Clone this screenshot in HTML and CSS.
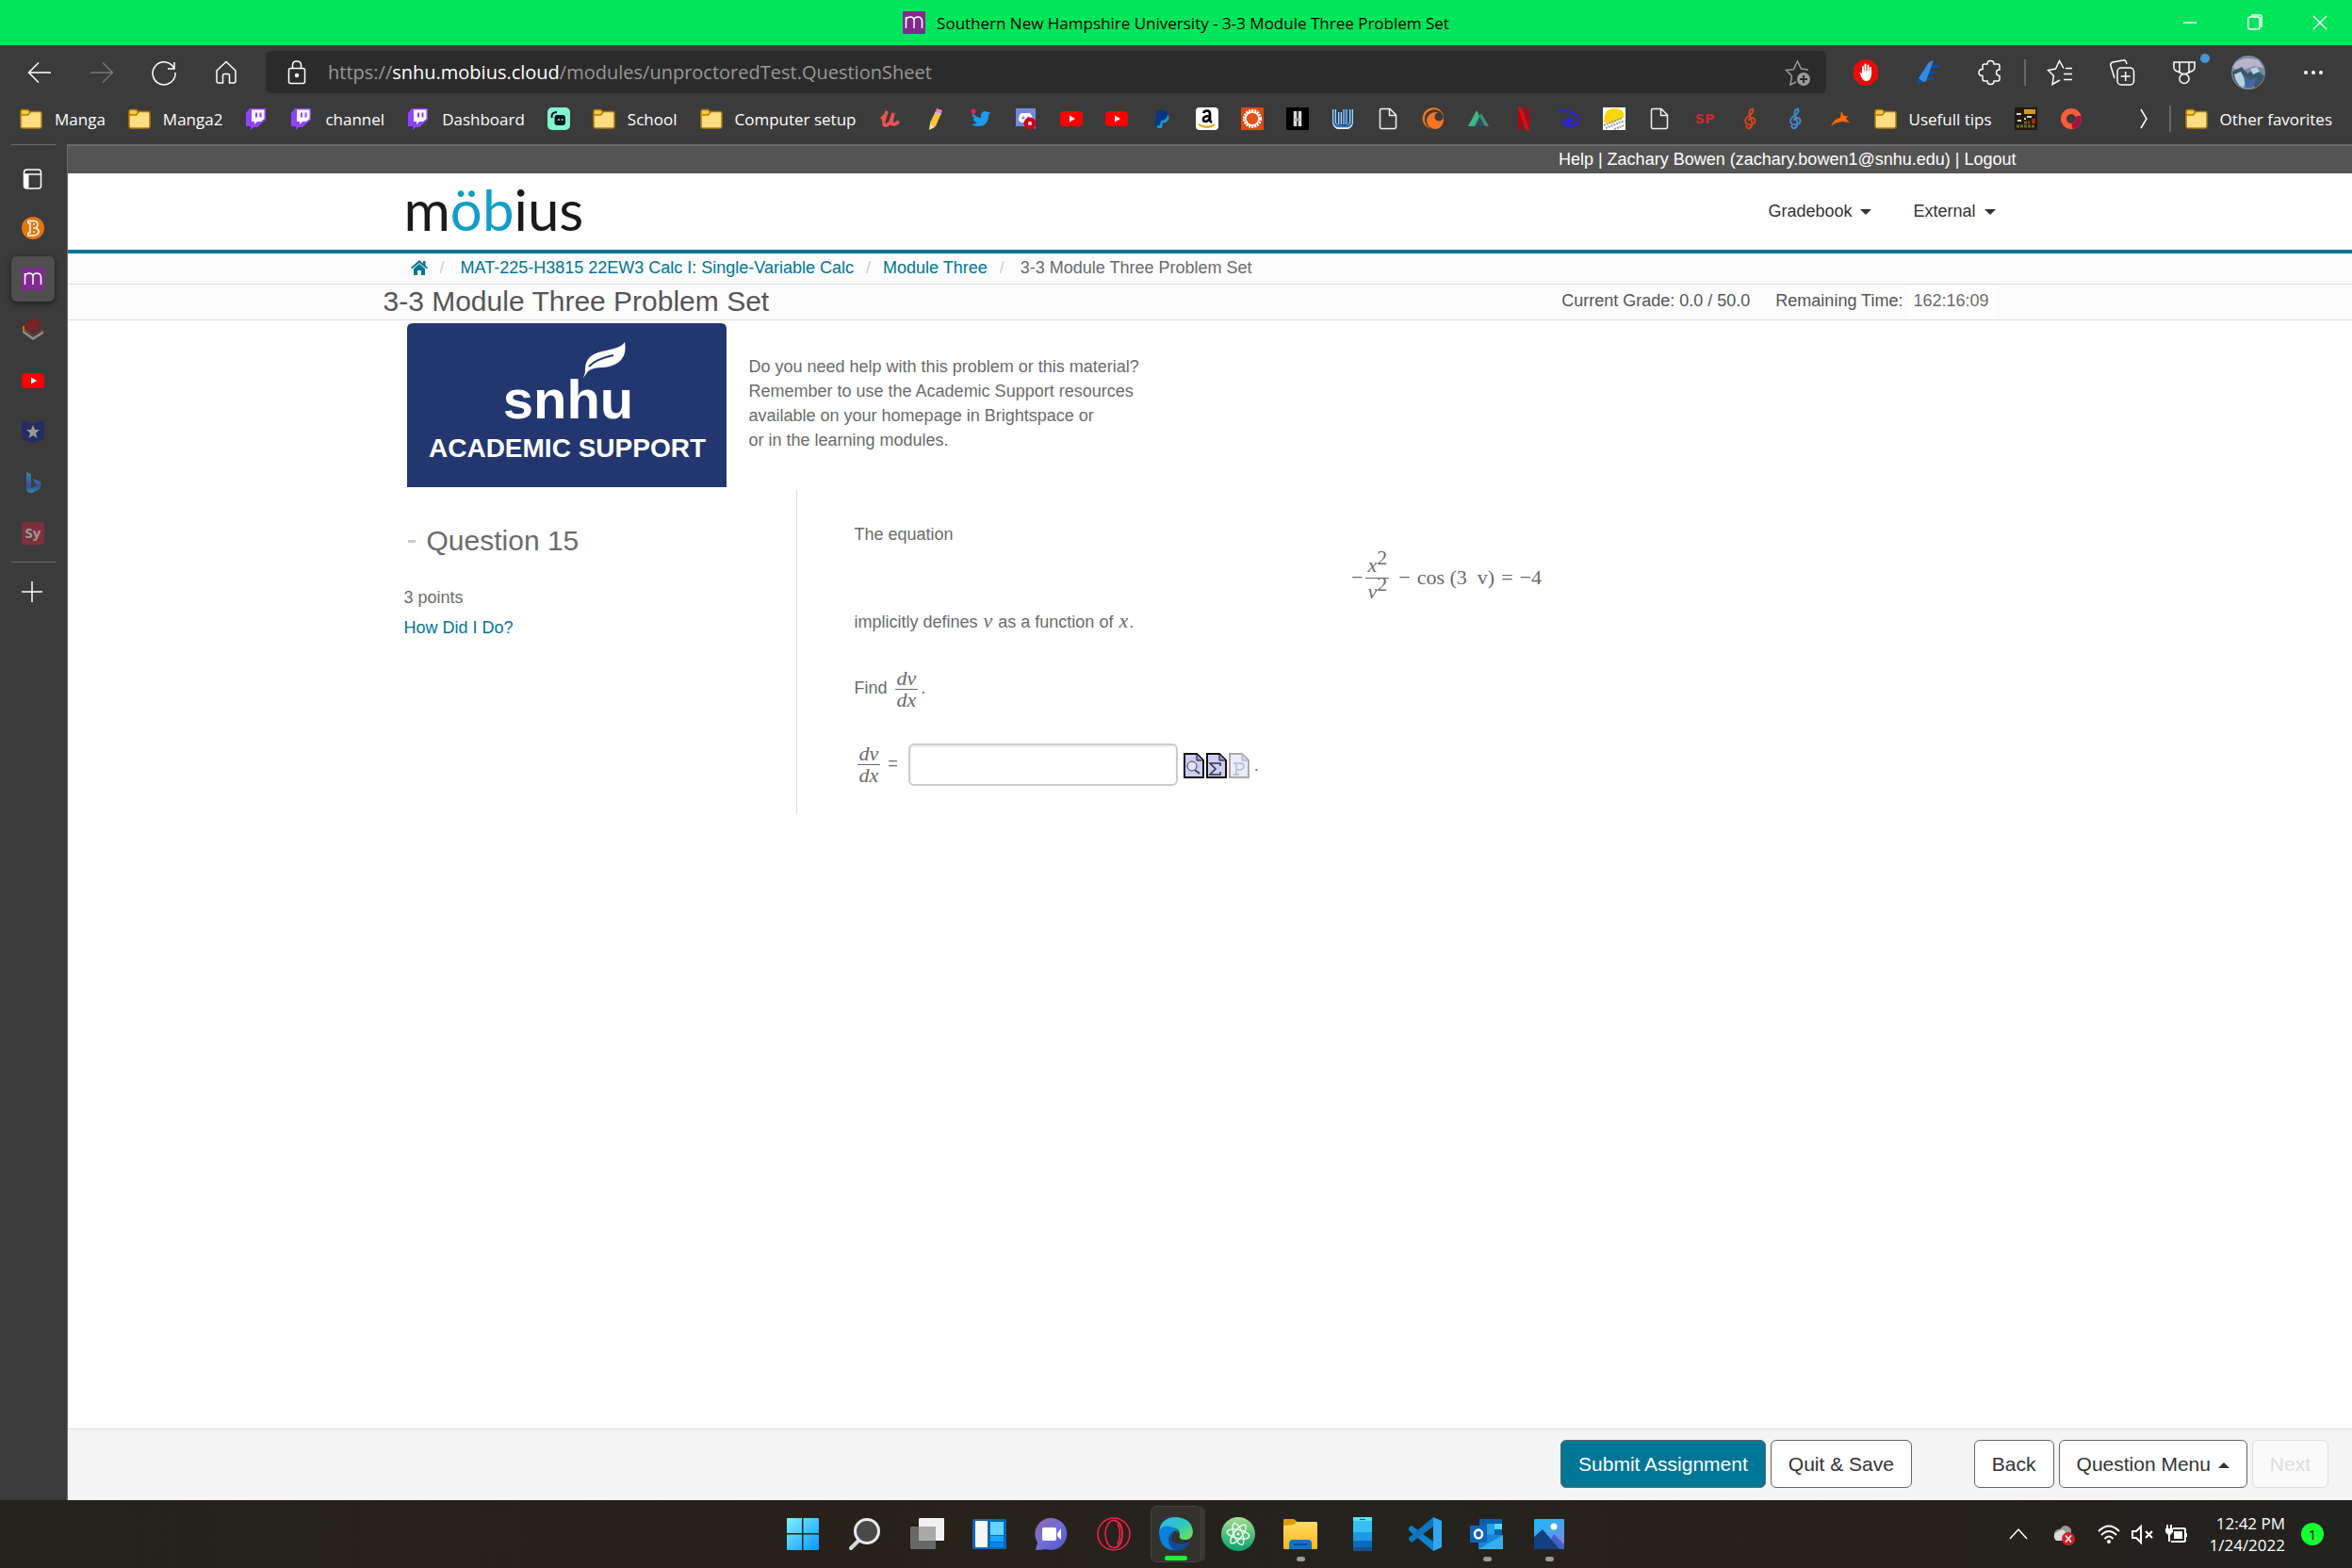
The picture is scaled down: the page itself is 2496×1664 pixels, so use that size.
FILE: index.html
```
<!DOCTYPE html>
<html lang="en">
<head>
  <meta charset="UTF-8">
  <meta name="viewport" content="width=device-width, initial-scale=1.0">
  <title>Southern New Hampshire University - 3-3 Module Three Problem Set</title>
  <link rel="stylesheet" href="styles.css">
</head>
<body>
  <!-- Shared icons -->
  <svg class="defs" aria-hidden="true">
    <defs>
      <linearGradient id="gWin" x1="0" y1="0" x2="1" y2="1"><stop offset="0" stop-color="#7df3ff"/><stop offset="1" stop-color="#0a94ff"/></linearGradient>
      <linearGradient id="gChat" x1="0" y1="0" x2="1" y2="1"><stop offset="0" stop-color="#9a62a8"/><stop offset=".5" stop-color="#6f70d8"/><stop offset="1" stop-color="#5252c8"/></linearGradient>
      <linearGradient id="gEdge" x1="0" y1="0" x2="1" y2="1"><stop offset="0" stop-color="#35b8f0"/><stop offset=".5" stop-color="#2cc8c0"/><stop offset="1" stop-color="#7ae83c"/></linearGradient>
      <linearGradient id="gAtom" x1="0" y1="0" x2="0" y2="1"><stop offset="0" stop-color="#a8dc90"/><stop offset="1" stop-color="#08a070"/></linearGradient>
      <linearGradient id="gFold" x1="0" y1="0" x2="0" y2="1"><stop offset="0" stop-color="#ffd966"/><stop offset="1" stop-color="#fcb814"/></linearGradient>
      <linearGradient id="gPhoto" x1="0" y1="0" x2="1" y2="1"><stop offset="0" stop-color="#22b4f0"/><stop offset=".5" stop-color="#40a8ee"/><stop offset="1" stop-color="#9a78dc"/></linearGradient>
      <linearGradient id="gBing" x1="0" y1="0" x2="0" y2="1"><stop offset="0" stop-color="#3b87a8"/><stop offset=".7" stop-color="#34509c"/><stop offset="1" stop-color="#3593a8"/></linearGradient>
    </defs>
    <symbol id="folder" viewBox="0 0 24 24"><path d="M1 4.500Q1 2.500 3 2.500H8.500L11 5V9H1z" fill="#ffc83d" stroke="#a87c0c" stroke-width="1.500"/><path d="M3 8H8.500L11.500 4.500H21Q23 4.500 23 6.500V20Q23 22 21 22H3Q1 22 1 20V8z" fill="#ffdd80" stroke="#a87c0c" stroke-width="1.500"/></symbol>
    <symbol id="twitch" viewBox="0 0 24 24"><path d="M5 1H22V13L13 21H9L6 24V20H1V6z" fill="#8f43ff"/><path d="M7 2.500H20.500V12L17 15H13L10 18V15H7z" fill="#fff"/><path d="M12 5.500V10.500M16.500 5.500V10.500" stroke="#8f43ff" stroke-width="2"/></symbol>
    <symbol id="youtube" viewBox="0 0 24 24"><g stroke="none"><rect y="4" width="24" height="16" rx="4" fill="#f00"/><path d="M10 8.500L16 12L10 15.500z" fill="#fff"/></g></symbol>
    <symbol id="page" viewBox="0 0 24 24"><path d="M5 1.500H14L20.500 8V20.500Q20.500 22.500 18.500 22.500H5Q3.500 22.500 3.500 20.500V3Q3.500 1.500 5 1.500zM13.500 2V8.500H20" fill="none" stroke="#f2f2f2" stroke-width="1.500"/></symbol>
    <symbol id="clef" viewBox="0 0 24 24"><path d="M8 19Q9 23 12 22Q15 20 14 15L11.500 7Q11 2 15 1.500Q17 5 11 9Q5 13 8 17Q12 20 16.500 17Q19 12 15 11Q11 11 11 14" fill="none" stroke="currentColor" stroke-width="2"/></symbol>
    <symbol id="mlogo" viewBox="0 0 24 24"><rect width="24" height="24" rx="1" fill="#812a91" stroke="none"/><path d="M3.500 18V6M3.500 10Q4 6 8 6T12 10V18M12 10Q12 6 16 6T20.500 10V18" fill="none" stroke="#fff" stroke-width="1.500"/></symbol>
  </svg>

  <header class="titlebar">
    <div class="tab-title">
      <svg class="ic24"><use href="#mlogo"/></svg>
      <span>Southern New Hampshire University - 3-3 Module Three Problem Set</span>
    </div>
    <div class="window-buttons">
      <button aria-label="Minimize"><svg class="ic24" viewBox="0 0 24 24"><path d="M5 12H19"/></svg></button>
      <button aria-label="Restore"><svg class="ic24" viewBox="0 0 24 24"><rect x="5" y="6" width="12" height="13" rx="2"/><path d="M8 4H17Q19 4 19 6V17"/></svg></button>
      <button aria-label="Close"><svg class="ic24" viewBox="0 0 24 24"><path d="M5 5L19 19M19 5L5 19"/></svg></button>
    </div>
  </header>

  <nav class="toolbar">
    <button aria-label="Back"><svg class="ic28" viewBox="0 0 28 28"><path d="M26 14H3M13 3.500L2.500 14L13 24.500"/></svg></button>
    <button class="dim" aria-label="Forward"><svg class="ic28" viewBox="0 0 28 28"><path d="M2 14H25M15 3.500L25.500 14L15 24.500"/></svg></button>
    <button aria-label="Refresh"><svg class="ic28" viewBox="0 0 28 28"><path d="M25 10A12 12 0 1 0 26 14M25 3V10H18"/></svg></button>
    <button aria-label="Home"><svg class="ic28" viewBox="0 0 28 28"><path d="M4 12L14 2.500L24 12V23Q24 25 22 25H17.500V17Q17.500 15.500 16 15.500H12Q10.500 15.500 10.500 17V25H6Q4 25 4 23z"/></svg></button>
    <div class="address">
      <svg class="ic28" viewBox="0 0 28 28"><rect x="5.500" y="9.500" width="17" height="16" rx="2"/><path d="M9.500 9.500V6Q9.500 2 14 2T18.500 6V9.500"/><circle cx="14" cy="17" r="1.500" fill="#fff"/></svg>
      <div class="url">https://<b>snhu.mobius.cloud</b>/modules/unproctoredTest.QuestionSheet</div>
      <svg class="ic28 dim" viewBox="0 0 28 28"><path d="M12 24L6 27L7.500 17.500L1.500 11.500L9.500 10.500L13.500 2L17.500 10L25 11"/><circle cx="20" cy="21" r="7" fill="#9a9a9a" stroke="none"/><path d="M16 21H24M20 17V25" stroke="#2b2b2b" stroke-width="2"/></svg>
    </div>
    <button aria-label="Ad blocker"><svg class="ic28" viewBox="0 0 28 28"><path d="M8.500 0.500H19.500L27 8V20L19.500 27.500H8.500L1 20V8z" fill="#ea0a0a" stroke="none"/><path d="M11 16V8M13.500 15V5.500M16.500 15V6.500M19 16V9" stroke="#fff" stroke-width="2" stroke-linecap="round"/><path d="M9.800 13V15L7.500 14Q10 23 14.500 23Q20 23 20.200 14V12z" fill="#fff" stroke="none"/></svg></button>
    <button aria-label="Pen"><svg class="ic28" viewBox="0 0 28 28"><path d="M15 7.500H26M14 14H23M12 20.500H20" stroke="#1348a8" stroke-width="3"/><path d="M15 3L20 1L12 23L3 26L4 20z" fill="#2f8de6" stroke="none"/><path d="M3 26L4 20L9 24z" fill="#164690" stroke="none"/></svg></button>
    <button aria-label="Extensions"><svg class="ic28" viewBox="0 0 28 28"><path d="M8 5H11Q11 1.500 14.500 1.500T18 5H22Q24 5 24 7V11Q20.500 11 20.500 14T24 17.500V21Q24 23 22 23H18Q18 26.500 14.500 26.500T11 23H8Q6 23 6 21V17.500Q2 17.500 2 14T6 10.500V7Q6 5 8 5z"/></svg></button>
    <span class="divider"></span>
    <button aria-label="Favorites"><svg class="ic28" viewBox="0 0 28 28"><path d="M18 9.500L13.500 1.500L9.500 10L1.500 11.500L7.500 17.500L6 26.500L14 22M20 9.500H27M18 15.500H27M18 21.500H27"/></svg></button>
    <button aria-label="Collections"><svg class="ic28" viewBox="0 0 28 28"><rect x="9" y="9" width="17.500" height="18" rx="4"/><path d="M17.700 13V23M12.700 18H22.700M6 20L2 7Q1 4 4 3L15 1Q18 0 19 5"/></svg></button>
    <button class="rewards" aria-label="Rewards"><svg class="ic28" viewBox="0 0 28 28"><path d="M3 3H25V9Q25 11 23 12L15.500 15.500H12.500L5 12Q3 11 3 9zM9 3V13.500M19 3V13.500"/><circle cx="14" cy="20.500" r="5"/></svg></button>
    <button class="wide" aria-label="Profile"><svg class="avatar" viewBox="0 0 36 36"><circle cx="18" cy="18" r="18" fill="#788ba6"/><path d="M4 8Q14 0 29 5L34 13L24 11L11 16L1 13z" fill="#b9b4c6"/><path d="M1 17L11 12L17 19L26 14L35 22Q31 32 25 34L17 24L7 31Q1 25 1 17z" fill="#3c5868"/><path d="M3 20L10 17L16 28L12 34Q4 29 3 20zM20 14L27 12L30 17L23 20z" fill="#b8d0e0"/><path d="M13 21L20 26L28 23L22 34H15z" fill="#42689c"/></svg></button>
    <button class="wide" aria-label="Settings and more"><svg class="ic28" viewBox="0 0 28 28"><g fill="#fff" stroke="none"><circle cx="6" cy="14" r="2"/><circle cx="14" cy="14" r="2"/><circle cx="22" cy="14" r="2"/></g></svg></button>
  </nav>

  <nav class="bookmarks">
    <a href="#"><svg class="ic24"><use href="#folder"/></svg>Manga</a>
    <a href="#"><svg class="ic24"><use href="#folder"/></svg>Manga2</a>
    <a href="#" aria-label="Twitch"><svg class="ic24"><use href="#twitch"/></svg></a>
    <a href="#"><svg class="ic24"><use href="#twitch"/></svg>channel</a>
    <a href="#"><svg class="ic24"><use href="#twitch"/></svg>Dashboard</a>
    <a href="#" aria-label="Streamlabs"><svg class="ic24" viewBox="0 0 24 24"><rect width="24" height="24" rx="5" fill="#80f5d2"/><rect x="7.500" y="8" width="11.500" height="11" rx="3" fill="#09161d"/><path d="M4.500 11Q4 5 10 5" fill="none" stroke="#09161d" stroke-width="2"/><path d="M12 12V14M15.500 12V14" stroke="#80f5d2" stroke-width="1.500"/></svg></a>
    <a href="#"><svg class="ic24"><use href="#folder"/></svg>School</a>
    <a href="#"><svg class="ic24"><use href="#folder"/></svg>Computer setup</a>
    <a href="#" aria-label="Udemy"><svg class="ic24" viewBox="0 0 24 24"><path d="M2 12Q8 8 8 4L5 14Q4 20 8 19Q12 18 15 6L13 15Q13 21 21 15" fill="none" stroke="#ec5252" stroke-width="3.500"/></svg></a>
    <a href="#" aria-label="Pencil"><svg class="ic24" viewBox="0 0 24 24"><path d="M12 4L18 6L12 20L6 23V16z" fill="#fbc13c"/><path d="M13 1L19 3L17.500 8L11.500 6z" fill="#f37bb4"/><path d="M11.500 5.500L17.500 7.500" stroke="#b8c8d0" stroke-width="2"/><path d="M6 17L11 21L5 24z" fill="#f3d8ae"/></svg></a>
    <a href="#" aria-label="Twitter"><svg class="ic24" viewBox="0 0 24 24"><path d="M22 5L20 8Q20 20 9 20Q5 20 2 18Q6 18 8 16Q4 15 4 12H6Q2 10 3 6Q7 11 12 11Q11 5 16 4Q18 4 19 5z" fill="#1d9bf0"/><circle cx="4" cy="4" r="2.500" fill="#ee1d60"/></svg></a>
    <a href="#" aria-label="Discord"><svg class="ic24" viewBox="0 0 24 24"><path d="M1 1H22V23L17 20H1z" fill="#7289da"/><path d="M4 14Q4 8 7 6H16Q19 9 19 14L16 16H7z" fill="#fff"/><circle cx="9" cy="11" r="1.500" fill="#7289da"/><circle cx="14" cy="11" r="1.500" fill="#7289da"/><circle cx="16" cy="17" r="6.500" fill="#d0021b"/><circle cx="16" cy="17" r="2" fill="#fff"/></svg></a>
    <a href="#" aria-label="YouTube"><svg class="ic24"><use href="#youtube"/></svg></a>
    <a href="#" aria-label="YouTube Studio"><svg class="ic24"><use href="#youtube"/></svg></a>
    <a href="#" aria-label="PayPal"><svg class="ic24" viewBox="0 0 24 24"><path d="M10 7H18Q22 12 16 16H13L12 22H7z" fill="#179bd7"/><path d="M7 3H14Q20 4 18 9Q16 14 11 14L10 19H4z" fill="#0a3587"/></svg></a>
    <a href="#" aria-label="Amazon"><svg class="ic24" viewBox="0 0 24 24"><rect width="24" height="24" rx="4" fill="#fff"/><path d="M8 6Q9 3.500 12 3.500Q15 3.500 15 7V13Q15 15 17 16M15 9Q8 9 8 12.500Q8 15 10.500 15T15 11" fill="none" stroke="#000" stroke-width="2.700"/><path d="M3 18Q12 24 20 18" fill="none" stroke="#f90" stroke-width="1.800"/></svg></a>
    <a href="#" aria-label="Sun"><svg class="ic24" viewBox="0 0 24 24"><rect width="24" height="24" fill="#dd4b14"/><circle cx="12" cy="12" r="8.500" fill="none" stroke="#fff" stroke-width="3" stroke-dasharray="2 1"/><circle cx="12" cy="12" r="7" fill="#e45416" stroke="#fff" stroke-width="1.500"/></svg></a>
    <a href="#" aria-label="H"><svg class="ic24" viewBox="0 0 24 24"><rect width="24" height="24" fill="#000"/><path d="M9.500 4V20M14.500 4V20" stroke="#ddd" stroke-width="3.500"/><path d="M9 13H15" stroke="#aaa" stroke-width="3"/></svg></a>
    <a href="#" aria-label="Wuxia"><svg class="ic24" viewBox="0 0 24 24"><path d="M3 2V16Q4 21 8 21H16Q20 21 21 16V2M9 5V18M14.500 2V18" fill="none" stroke="#e8f4fc" stroke-width="4"/><path d="M3 2V16Q4 20 8 20H16Q20 20 21 16V2M9 5V18M14.500 2V18" fill="none" stroke="#2574c6" stroke-width="2.500"/></svg></a>
    <a href="#" aria-label="Page"><svg class="ic24"><use href="#page"/></svg></a>
    <a href="#" aria-label="Crunchyroll"><svg class="ic24" viewBox="0 0 24 24"><path d="M10 23A11.500 11.500 0 1 1 23.500 11Q20 1 11 2.500Q2 5 3 14Q4 20 10 23z" fill="#f47521"/><circle cx="14" cy="14" r="9" fill="#f47521"/><circle cx="18" cy="10" r="4.500" fill="#3b3b3b"/></svg></a>
    <a href="#" aria-label="Mountain"><svg class="ic24" viewBox="0 0 24 24"><path d="M10 3L19 20H1z" fill="#41b883"/><path d="M15 6L23 20H8z" fill="#34495e"/><path d="M15 6L23 20H19L13 9z" fill="#3f8f72"/></svg></a>
    <a href="#" aria-label="Netflix"><svg class="ic24" viewBox="0 0 24 24"><path d="M6 0H10V24L6 23zM14 0H18V23L14 24z" fill="#b1060f"/><path d="M6 0H10L18 24H14z" fill="#e50914"/></svg></a>
    <a href="#" aria-label="Disney"><svg class="ic24" viewBox="0 0 24 24"><path d="M1 4Q17 2 22 11Q24 20 12 19Q4 18 6 15Q10 13 18 14M12 9V22" fill="none" stroke="#2a22dc" stroke-width="2.400"/></svg></a>
    <a href="#" aria-label="Weather"><svg class="ic24" viewBox="0 0 24 24"><rect width="24" height="24" fill="#fff"/><path d="M1 16Q1 1 12 1T23 10L10 17z" fill="#f8d90c"/><path d="M1 19L21 11M3 22L23 14M12 23L23 19" stroke="#999" stroke-width="2" stroke-dasharray="2 1"/></svg></a>
    <a href="#" aria-label="Page"><svg class="ic24"><use href="#page"/></svg></a>
    <a href="#" aria-label="SP"><svg class="ic24" viewBox="0 0 24 24"><text class="sp-text" x="12" y="17" text-anchor="middle">SP</text></svg></a>
    <a href="#" aria-label="Clef"><svg class="ic24 clef-red"><use href="#clef"/></svg></a>
    <a href="#" aria-label="Clef"><svg class="ic24 clef-blue"><use href="#clef"/></svg></a>
    <a href="#" aria-label="Deer"><svg class="ic24" viewBox="0 0 24 24"><path d="M2 20Q5 12 12 11L13 4L16 9L20 9L18 12L22 16L14 15Q6 16 2 20z" fill="#f96706"/></svg></a>
    <a href="#"><svg class="ic24"><use href="#folder"/></svg>Usefull tips</a>
    <a href="#" aria-label="Gallery"><svg class="ic24" viewBox="0 0 24 24"><rect width="24" height="24" fill="#24180f"/><path d="M10 2H22V7H10z" fill="#d4981b"/><path d="M2 7H7M13 10H18M3 14H7M10 12H12" stroke="#d5d5b8" stroke-width="2"/><path d="M2 20H22M10 16H16" stroke="#647127" stroke-width="3" stroke-dasharray="3 1"/><path d="M18 12H22V17H18z" fill="#a22d20"/></svg></a>
    <a href="#" aria-label="Ring"><svg class="ic24" viewBox="0 0 24 24"><circle cx="12" cy="12" r="8" fill="none" stroke="#ff5a36" stroke-width="6"/><path d="M20 9Q21 18 13 20" fill="none" stroke="#a80d45" stroke-width="5.500"/></svg></a>
    <div class="bookmarks-end">
      <button aria-label="More bookmarks"><svg class="ic24" viewBox="0 0 24 24"><path d="M9 2L15 12L9 22"/></svg></button>
      <span class="divider"></span>
      <a href="#"><svg class="ic24"><use href="#folder"/></svg>Other favorites</a>
    </div>
  </nav>

  <div class="workspace">
    <aside class="sidebar">
      <hr>
      <button class="side-tabs" aria-label="Tab menu"><svg class="ic24" viewBox="0 0 24 24"><rect x="2.500" y="2" width="18" height="20" rx="3"/><path d="M2 7H21"/><path d="M5 7V21" stroke-width="5"/></svg></button>
      <button aria-label="B"><svg class="ic24" viewBox="0 0 24 24"><circle cx="12" cy="12" r="12" fill="#e8740c" stroke="none"/><path d="M7 4.500H13Q17 5 17 8T15 12Q18 13 18 16T13 20H7V17H9V7H7zM12 8H14M12 12H14M12 16H14" stroke="#fff"/></svg></button>
      <button class="active" aria-label="Mobius"><svg class="ic24"><use href="#mlogo"/></svg></button>
      <button aria-label="Books"><svg class="ic24" viewBox="0 0 24 24"><path d="M1 10L12 18L23 11V16L12 23L1 15z" fill="#8e8e8e" stroke="none"/><path d="M1 7L13 0L21 5L11 13z" fill="#7e2222" stroke="none"/><path d="M1 8L11 15L22 8M2 12L12 19L23 12" stroke="#6e2a2a"/><path d="M2 8V14" stroke="#a87b2b" stroke-width="2"/></svg></button>
      <button aria-label="YouTube"><svg class="ic24"><use href="#youtube"/></svg></button>
      <button aria-label="Star"><svg class="ic24" viewBox="0 0 24 24"><path d="M0 0L12 3L24 0V20L12 24L0 20z" fill="#252c60" stroke="none"/><path d="M12 5L14 10H19L15 13.500L16.500 19L12 16L7.500 19L9 13.500L5 10H10z" fill="#999" stroke="none"/></svg></button>
      <button aria-label="Bing"><svg class="ic24" viewBox="0 0 24 24"><path d="M5 1L10 3V18L14 16L17 14.500L14 13L12 8L20 11Q22 15 19 19L11 23Q5 23 5 19z" fill="url(#gBing)" stroke="none"/></svg></button>
      <button aria-label="Symbolab"><svg class="ic24" viewBox="0 0 24 24"><rect width="24" height="24" rx="3" fill="#7c303c" stroke="none"/><text class="sy-text" x="12" y="17" text-anchor="middle">Sy</text></svg></button>
      <hr>
      <button class="side-add" aria-label="Add"><svg class="ic24" viewBox="0 0 24 24"><path d="M11 1V23M0 12H22"/></svg></button>
    </aside>

    <div class="page">
      <div class="account">
        <div class="container">
          <a href="#">Help</a> | <a href="#">Zachary Bowen (zachary.bowen1@snhu.edu)</a> | <a href="#">Logout</a>
        </div>
      </div>
      <header class="site-header">
        <div class="container">
          <div class="brand">m<span>öb</span>ius</div>
          <nav class="menu">
            <button>Gradebook <i class="caret"></i></button>
            <button>External <i class="caret"></i></button>
          </nav>
        </div>
      </header>
      <div class="crumbs">
        <ol class="container">
          <li><a href="#" aria-label="Home"><svg class="home" viewBox="0 0 18 18"><path d="M9 1L18 9L17 10.500L9 4L1 10.500L0 9zM13 2H15.500V7L13 5zM3 10L9 5L15 10V17H11V12H7V17H3z" fill="#007697"/></svg></a></li>
          <li class="course"><a href="#">MAT-225-H3815 22EW3 Calc I: Single-Variable Calc</a></li>
          <li><a href="#">Module Three</a></li>
          <li class="current">3-3 Module Three Problem Set</li>
        </ol>
      </div>
      <div class="heading">
        <div class="container">
          <h1>3-3 Module Three Problem Set</h1>
          <div class="status">
            <span>Current Grade: 0.0 / 50.0</span>
            <span>Remaining Time: <span class="timer">162:16:09</span></span>
          </div>
        </div>
      </div>

      <main class="container content">
        <section class="support">
          <svg class="support-logo" viewBox="0 0 339 174" role="img" aria-label="SNHU Academic Support">
            <path d="M0 6Q0 0 6 0H333Q339 0 339 6V174H0z" fill="#22376f"/>
            <text class="snhu-text" x="171" y="101" text-anchor="middle">snhu</text>
            <path d="M189 52C188 30 206 31 219 27Q228 25 231 20C234 36 225 46 207 47Q197 47 192 51L187 58z" fill="#fff"/>
            <path d="M193 46Q200 38 219 34" fill="none" stroke="#22376f" stroke-width="2"/>
            <text class="academic-text" x="170" y="142" text-anchor="middle">ACADEMIC SUPPORT</text>
          </svg>
          <p>Do you need help with this problem or this material?<br>Remember to use the Academic Support resources<br>available on your homepage in Brightspace or<br>or in the learning modules.</p>
        </section>

        <section class="question">
          <div class="question-info">
            <h2><span class="dash"></span>Question 15</h2>
            <p>3 points</p>
            <p><a href="#">How Did I Do?</a></p>
          </div>
          <div class="question-body">
            <p>The equation</p>
            <div class="equation">
              <span>−</span>
              <span class="frac"><span><i>x</i><sup>2</sup></span><span><i>v</i><sup>2</sup></span></span>
              <span class="op">−</span>
              <span>cos (3 &nbsp;v)</span>
              <span class="op">=</span>
              <span>−4</span>
            </div>
            <p>implicitly defines <i class="var">v</i> as a function of <i class="var">x</i>.</p>
            <div class="find">Find <span class="frac"><i>dv</i><i>dx</i></span>.</div>
            <div class="answer">
              <label for="answer"><span class="frac"><i>dv</i><i>dx</i></span> =</label>
              <input type="text" id="answer">
              <button aria-label="Preview"><svg viewBox="0 0 22 27"><path d="M1 1H14L21 8V26H1z" fill="#ccccfb" stroke="#111" stroke-width="2"/><path d="M14 1V8H21z" fill="#9a9acb" stroke="#111"/><circle cx="9" cy="14" r="5" fill="#e2e2ff" stroke="#444"/><path d="M12 18L17 22" stroke="#444" stroke-width="2"/></svg></button>
              <button aria-label="Equation editor"><svg viewBox="0 0 22 27"><path d="M1 1H14L21 8V26H1z" fill="#ccccfb" stroke="#111" stroke-width="2"/><path d="M14 1V8H21z" fill="#9a9acb" stroke="#111"/><path d="M15 14V11H4L10 17L4 23H15V20" fill="none" stroke="#333" stroke-width="1.500"/></svg></button>
              <button aria-label="Plot" disabled><svg viewBox="0 0 22 27"><path d="M1 1H14L21 8V26H1z" fill="#ebebff" stroke="#aaa" stroke-width="2"/><path d="M14 1V8H21z" fill="#d4d4e8" stroke="#aaa"/><path d="M5 23H11M8 23V11M5 11H12Q16 11 16 14T12 18H8" fill="none" stroke="#b8b8c8" stroke-width="1.500"/></svg></button>
              <span>.</span>
            </div>
          </div>
        </section>
      </main>

      <footer class="actions">
        <button class="btn primary">Submit Assignment</button>
        <button class="btn">Quit &amp; Save</button>
        <button class="btn back">Back</button>
        <button class="btn">Question Menu <i class="caret up"></i></button>
        <button class="btn" disabled>Next</button>
      </footer>
    </div>
  </div>

  <footer class="taskbar">
    <div class="apps">
      <button aria-label="Start"><svg viewBox="0 0 36 36"><path d="M1.500 1Q1 1 1 2V17H17V1zM18.500 1V17H35V2Q35 1 34 1zM1 18.500V34Q1 35 2 35H17V18.500zM18.500 18.500V35H34Q35 35 35 34V18.500z" fill="url(#gWin)"/></svg></button>
      <button aria-label="Search"><svg viewBox="0 0 36 36"><path d="M11 25L3 33" stroke="#d5d8dc" stroke-width="4" stroke-linecap="round"/><circle cx="20" cy="15" r="12.500" fill="#4b4a46" stroke="#e8eaec" stroke-width="3"/></svg></button>
      <button aria-label="Task view"><svg viewBox="0 0 36 36"><rect x="9" y="1" width="27" height="24" rx="1" fill="#f1f1f1"/><rect y="10" width="27" height="24" rx="1" fill="#686866"/><path d="M9 10H27V25H9z" fill="#a9a9a8"/></svg></button>
      <button aria-label="Widgets"><svg viewBox="0 0 36 36"><rect y="2" width="36" height="32" rx="1" fill="#0a66bb"/><rect x="3" y="4" width="13" height="28" rx="1" fill="#f5f5f5"/><path d="M19 5H33V19H19z" fill="#64d4ff"/><path d="M19 20H33V26H19z" fill="#1ba4ff"/><path d="M19 27H33V32H19z" fill="#0a84f0"/></svg></button>
      <button aria-label="Chat"><svg viewBox="0 0 36 36"><path d="M1 35L3 27A17 17 0 1 1 12 34Q7 35 1 35z" fill="url(#gChat)"/><rect x="8" y="11" width="15" height="14" rx="2" fill="#fff"/><path d="M24 17L28 12V24L24 20z" fill="#fff"/></svg></button>
      <button aria-label="Opera"><svg viewBox="0 0 36 36"><g fill="none" stroke="#fa1e4e" stroke-width="1.500"><circle cx="18" cy="18" r="17"/><ellipse cx="18" cy="18" rx="9" ry="14.500"/><path d="M22 7Q27 18 22 29M18 3.500Q27 4 27 18T18 32.500"/></g></svg></button>
      <button class="current-app" aria-label="Edge"><svg viewBox="0 0 36 36"><path d="M0 17Q1 0 18 0Q35 1 36 16Q35 24 28 24Q20 24 22 19Q22 12 14 11Q4 10 0 17z" fill="url(#gEdge)"/><path d="M0 16Q2 8 12 10Q20 12 21 18Q18 12 14 17Q9 26 20 35Q1 37 0 16z" fill="#0a82d8"/><path d="M15 15Q10 20 14 25Q20 31 33 26Q28 36 18 36Q10 32 10 24Q10 18 15 15z" fill="#114a98"/></svg></button>
      <button aria-label="Atom"><svg viewBox="0 0 36 36"><circle cx="18" cy="18" r="18" fill="url(#gAtom)"/><g fill="none" stroke="#f4fff4" stroke-width="1.300"><ellipse cx="18" cy="18" rx="12" ry="4.500" transform="rotate(12 18 18)"/><ellipse cx="18" cy="18" rx="12" ry="4.500" transform="rotate(70 18 18)"/><ellipse cx="18" cy="18" rx="12" ry="4.500" transform="rotate(128 18 18)"/></g><circle cx="18" cy="18" r="1.500" fill="#fff"/></svg></button>
      <button class="open" aria-label="File Explorer"><svg viewBox="0 0 36 36"><path d="M0 3Q0 2 1 2H11L16 6V11H0z" fill="#dd9b00"/><path d="M0 9L11 8L14 5H35Q36 5 36 7V33Q36 34 35 34H1Q0 34 0 33z" fill="url(#gFold)"/><path d="M6 34V28Q6 24 10 24H26Q30 24 30 28V34z" fill="#0d73c8"/><path d="M11 29H25" stroke="#0a4a8c" stroke-width="2"/></svg></button>
      <button aria-label="Your Phone"><svg viewBox="0 0 36 36"><path d="M8 0H28V5H8z" fill="#52e4ff"/><path d="M8 4H28V16H8z" fill="#38bff4"/><path d="M8 16H28V25H8z" fill="#1c9be4"/><path d="M8 25H28V32H8z" fill="#086ac0"/><path d="M8 32H28V36H8z" fill="#14528c"/><path d="M15 2.500H21" stroke="#146080"/></svg></button>
      <button aria-label="Visual Studio Code"><svg viewBox="0 0 36 36"><path d="M1 11L4 9L27 26V36L1 14z" fill="#0f82cc"/><path d="M1 24L4 27L27 10V0L1 22z" fill="#0c76bc"/><path d="M27 0L36 4V32L27 36z" fill="#2fa7f2"/></svg></button>
      <button class="open" aria-label="Outlook"><svg viewBox="0 0 36 36"><path d="M10 2H34V20H10z" fill="#0a5fae"/><path d="M18 7H26V19H18z" fill="#28a0e4"/><path d="M26 7H34V13H26z" fill="#52dcff"/><path d="M9 18L35 19V34H9z" fill="#1685d4"/><path d="M9 34L35 19V34z" fill="#36aff0"/><rect y="9" width="18" height="18" rx="1" fill="#0f64b8"/><ellipse cx="9" cy="18" rx="4" ry="4.500" fill="none" stroke="#fff" stroke-width="2.500"/></svg></button>
      <button class="open" aria-label="Photos"><svg viewBox="0 0 36 36"><rect x="2" y="2" width="32" height="32" rx="1" fill="url(#gPhoto)"/><path d="M14 34L23 18L34 29V34z" fill="#4560c4"/><path d="M2 21L11 13L29 34H2z" fill="#153f80"/><circle cx="23" cy="10" r="3.500" fill="#fff"/></svg></button>
    </div>
    <div class="tray">
      <svg class="ic24" viewBox="0 0 24 24"><path d="M3 17L12 7L21 17"/></svg>
      <svg class="ic24 cloud" viewBox="0 0 24 24"><path d="M6 16Q0 14 3 9Q6 6 8 7Q14 -1 20 7V14z" fill="#999" stroke="none"/><path d="M4 19Q-1 13 5 10Q13 4 15 13V19z" fill="#dcdcdc" stroke="none"/><circle cx="17" cy="17" r="7" fill="#d32029" stroke="none"/><path d="M14 13.500L20 20.500M20 13.500L14 20.500"/></svg>
      <svg class="ic24" viewBox="0 0 24 24"><path d="M1 9Q12 -2 23 9M4 13Q12 5 20 13M7.500 17Q12 12 16.500 17" stroke-width="2"/><circle cx="12" cy="20" r="2" fill="#fff" stroke="none"/></svg>
      <svg class="ic24" viewBox="0 0 24 24"><path d="M1 9H5L10 4V21L5 16H1zM15 9L22 16M22 9L15 16" stroke-width="2"/></svg>
      <svg class="ic24" viewBox="0 0 24 24"><path d="M8 6H20Q21 6 21 8V18Q21 20 20 20H6M4 14V20M2 2V6M6 2V6M22 11V15" stroke-width="2"/><path d="M0 6H8V10L5 13V16H3V13L0 10z" fill="#fff" stroke="none"/><path d="M9 9H18V17H9z" fill="#fff" stroke="none"/></svg>
      <div class="clock">12:42 PM<br>1/24/2022</div>
      <span class="badge">1</span>
    </div>
  </footer>
</body>
</html>
```
FILE: styles.css
```
/* General Reset */
* {
  margin: 0;
  padding: 0;
  box-sizing: border-box;
}

body {
  display: flex;
  flex-direction: column;
  min-height: 100vh;
  background: #3b3b3b;
  color: #6b6b6b;
  font-family: "Liberation Sans", Arial, sans-serif;
  font-size: 18px;
}

button {
  border: none;
  background: none;
  color: inherit;
  font: inherit;
}

a {
  color: #007697;
  text-decoration: none;
}

svg {
  display: block;
  flex: none;
}

.defs {
  position: absolute;
  width: 0;
  height: 0;
}

.ic24 {
  width: 24px;
  height: 24px;
}

.ic28 {
  width: 28px;
  height: 28px;
}

/* Title bar */
.titlebar,
.toolbar,
.bookmarks,
.taskbar {
  font-family: "Open Sans", "Noto Sans", sans-serif;
}

.titlebar {
  display: grid;
  grid-template-columns: 1fr auto 1fr;
  align-items: center;
  height: 48px;
  background: #00e65b;
  color: #000;
  font-size: 17px;
}

.tab-title {
  grid-column: 2;
  display: flex;
  align-items: center;
  gap: 12px;
}

.window-buttons {
  display: flex;
  justify-content: flex-end;
}

.window-buttons button {
  display: grid;
  place-items: center;
  width: 69px;
  height: 48px;
}

.window-buttons svg,
.toolbar svg,
.bookmarks-end button svg,
.sidebar svg,
.tray svg {
  fill: none;
  stroke: #fff;
  stroke-width: 1.5;
}

/* Toolbar */
.toolbar {
  display: flex;
  align-items: center;
  height: 57px;
  padding: 0 7px 0 9px;
}

.toolbar button {
  display: grid;
  place-items: center;
  flex: none;
  width: 66px;
  height: 48px;
}

.toolbar .wide {
  width: 69px;
}

.toolbar .dim {
  stroke: #9a9a9a;
}

.toolbar .dim svg {
  stroke: #777;
}

.address {
  display: flex;
  flex: 1;
  align-items: center;
  height: 45px;
  margin: 0 9px;
  padding: 0 16px 0 19px;
  border-radius: 6px;
  background: #2b2b2b;
}

.url {
  flex: 1;
  padding-left: 19px;
  color: #999;
  font-size: 20px;
}

.url b {
  color: #fff;
  font-weight: normal;
}

.divider {
  width: 2px;
  height: 28px;
  margin: 0 3px;
  background: #666;
}

.rewards {
  position: relative;
}

.rewards::after {
  content: "";
  position: absolute;
  top: 4px;
  right: 6px;
  width: 10px;
  height: 10px;
  border-radius: 50%;
  background: #4697d8;
}

.toolbar .avatar {
  width: 36px;
  height: 36px;
  stroke: none;
}

/* Bookmarks */
.bookmarks {
  display: flex;
  align-items: center;
  gap: 24px;
  height: 48px;
  padding: 0 21px 6px;
  font-size: 17px;
}

.bookmarks a {
  display: flex;
  flex: none;
  gap: 13px;
  align-items: center;
  color: #fff;
  white-space: nowrap;
}

.bookmarks-end {
  display: flex;
  align-items: center;
  gap: 12px;
  margin-left: auto;
}

.sp-text {
  fill: #cc2b2b;
  font: bold 14px "DejaVu Sans", sans-serif;
}

.clef-red {
  color: #d8441c;
}

.clef-blue {
  color: #4688d0;
}

/* Vertical tabs */
.workspace {
  display: flex;
  flex: 1;
}

.sidebar {
  display: flex;
  flex-direction: column;
  width: 71px;
  padding: 0 12px;
}

.sidebar hr {
  height: 1px;
  border: none;
  background: #6b6b6b;
}

.sidebar button {
  display: grid;
  place-items: center;
  width: 46px;
  height: 48px;
  margin-bottom: 6px;
  border-radius: 6px;
}

.sidebar .side-tabs {
  margin-top: 12px;
  margin-bottom: 4px;
}

.sidebar .active {
  background: #4f4f4f;
  box-shadow: 0 2px 6px #1c1c1c;
}

.sidebar .side-add {
  margin-top: 7px;
}

.sy-text {
  fill: #999;
  stroke: none;
  font: bold 15px "Open Sans", sans-serif;
}

/* Page */
.page {
  display: flex;
  flex: 1;
  flex-direction: column;
  border-top: 2px solid #6b6b6b;
  border-left: 1px solid #6b6b6b;
  background: #fff;
}

.container {
  width: 100%;
  max-width: 1755px;
  margin: 0 auto;
  padding: 0 22px;
}

.account {
  background: #545454;
  color: #fff;
  line-height: 29px;
  text-align: right;
}

.account a {
  color: #fff;
}

.site-header {
  border-bottom: 4px solid #007697;
}

.site-header .container {
  display: flex;
  align-items: center;
  justify-content: space-between;
  height: 81px;
}

.brand {
  padding-bottom: 6px;
  color: #1a1a1a;
  font-family: Lato, sans-serif;
  font-size: 60px;
  line-height: 60px;
}

.brand span {
  color: #109fc8;
}

.menu {
  display: flex;
  gap: 44px;
  padding-right: 22px;
  color: #333;
}

.caret {
  display: inline-block;
  margin-left: 4px;
  border: 6px solid transparent;
  border-top-color: #333;
  border-bottom: none;
  vertical-align: middle;
}

.caret.up {
  border-top: none;
  border-bottom: 6px solid #333;
  margin-left: 2px;
}

.crumbs,
.heading {
  border-bottom: 1px solid #ddd;
  background: #fcfcfc;
}

.crumbs ol {
  display: flex;
  align-items: center;
  height: 32px;
  padding-bottom: 2px;
  padding-left: 29px;
  list-style: none;
}

.crumbs li + li::before {
  content: "/";
  padding: 0 13px;
  color: #ccc;
}

.crumbs .course::before,
.crumbs .current::before {
  padding-right: 17px;
}

.home {
  width: 18px;
  height: 18px;
}

.heading .container {
  display: flex;
  align-items: center;
  justify-content: space-between;
  height: 37px;
  padding: 0 43px 2px 0;
  color: #555;
}

h1,
h2 {
  font-size: 30px;
  font-weight: normal;
}

.status {
  display: flex;
  gap: 27px;
}

.timer {
  padding: 6px 8px 6px 6px;
  background: #fff;
  color: #6b6b6b;
}

/* Assignment content */
.content {
  flex: 1;
}

.support {
  display: flex;
  align-items: center;
  gap: 24px;
  padding: 3px;
  line-height: 26px;
}

.support p {
  margin-bottom: 4px;
}

.support-logo {
  width: 339px;
  height: 174px;
}

.snhu-text {
  fill: #fff;
  font: bold 58px "Liberation Sans Narrow", "Liberation Sans", sans-serif;
}

.academic-text {
  fill: #fff;
  font: bold 28px "Liberation Sans Narrow", "Liberation Sans", sans-serif;
}

.question {
  display: grid;
  grid-template-columns: 417px 1fr;
  min-height: 344px;
}

.question-info {
  border-right: 1px solid #ddd;
  line-height: 32px;
}

.question-info h2 {
  display: flex;
  align-items: center;
  gap: 12px;
  margin: 38px 0 28px 4px;
}

.dash {
  width: 8px;
  height: 3px;
  background: #ccc;
}

.question-body {
  padding-top: 34px;
  padding-left: 61px;
  line-height: 26px;
}

.equation,
.frac,
.var {
  font-family: "Liberation Serif", "Times New Roman", serif;
  font-size: 22px;
}

.equation {
  display: flex;
  align-items: center;
  justify-content: center;
  height: 66px;
  margin-right: -24px;
}

.frac {
  display: inline-flex;
  flex-direction: column;
  align-items: center;
  padding: 0 3px;
  line-height: 22px;
  vertical-align: middle;
}

.frac > :first-child {
  padding: 0 2px;
  border-bottom: 1px solid #6b6b6b;
}

.equation .frac {
  line-height: 27px;
}

.op {
  padding: 0 7px;
}

.var {
  padding: 0 1px;
}

sup {
  font-size: 22px;
  line-height: 0;
}

.find {
  margin-top: 36px;
}

.answer {
  display: flex;
  align-items: center;
  margin-top: 35px;
}

.answer input {
  width: 286px;
  height: 45px;
  margin: 0 6px 0 11px;
  border: 2px solid #ccc;
  border-radius: 6px;
  box-shadow: inset 0 2px 2px #eee;
}

.answer button {
  margin-top: 2px;
  margin-right: 2px;
}

.answer svg {
  width: 22px;
  height: 27px;
}

.answer > span {
  margin-left: 3px;
}

/* Bottom buttons */
.actions {
  display: flex;
  align-items: center;
  justify-content: flex-end;
  gap: 5px;
  height: 76px;
  padding: 0 25px 2px;
  border-top: 1px solid #ddd;
  background: #f4f4f4;
}

.btn {
  height: 51px;
  padding: 0 18px;
  border: 1px solid #666;
  border-radius: 6px;
  background: #fff;
  color: #333;
  font-size: 21px;
}

.btn.primary {
  background: #007697;
  color: #fff;
}

.btn.back {
  margin-left: 61px;
}

.btn:disabled {
  border-color: #ddd;
  background: #fafafa;
  color: #ddd;
}

/* Taskbar */
.taskbar {
  display: grid;
  grid-template-columns: 1fr auto 1fr;
  align-items: center;
  height: 72px;
  background: linear-gradient(90deg, #24231e, #292119 30%, #24231e 60%, #292119 72%, #222220);
  color: #fff;
}

.apps {
  grid-column: 2;
  display: flex;
  gap: 12px;
}

.apps button {
  display: grid;
  place-items: center;
  position: relative;
  width: 54px;
  height: 60px;
  border-radius: 6px;
}

.apps svg {
  width: 36px;
  height: 36px;
}

.apps .current-app {
  border: 1px solid #44433e;
  background: #33322d;
  box-shadow: 5px 0 0 -1px #383732;
}

.apps .current-app::after,
.apps .open::after {
  content: "";
  position: absolute;
  bottom: 1px;
  width: 9px;
  height: 5px;
  border-radius: 3px;
  background: #999;
}

.apps .current-app::after {
  width: 24px;
  background: #14ff32;
}

.tray {
  display: flex;
  align-items: center;
  justify-content: flex-end;
  gap: 12px;
  padding-right: 30px;
}

.cloud {
  margin: 0 12px;
}

.clock {
  margin: 0 5px 0 10px;
  font-size: 17px;
  line-height: 23px;
  text-align: right;
}

.badge {
  width: 24px;
  height: 24px;
  border-radius: 50%;
  background: #14ff32;
  color: #000;
  font-size: 15px;
  line-height: 24px;
  text-align: center;
}
```
